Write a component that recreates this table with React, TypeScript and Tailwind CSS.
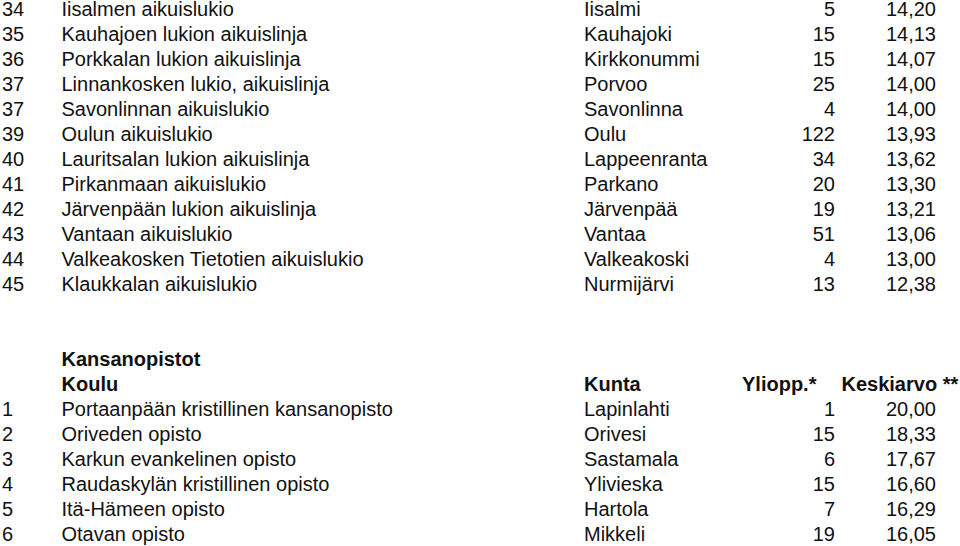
import React from "react";

type Row = [string, string, string, string, string];

const top: Row[] = [
  ["34", "Iisalmen aikuislukio", "Iisalmi", "5", "14,20"],
  ["35", "Kauhajoen lukion aikuislinja", "Kauhajoki", "15", "14,13"],
  ["36", "Porkkalan lukion aikuislinja", "Kirkkonummi", "15", "14,07"],
  ["37", "Linnankosken lukio, aikuislinja", "Porvoo", "25", "14,00"],
  ["37", "Savonlinnan aikuislukio", "Savonlinna", "4", "14,00"],
  ["39", "Oulun aikuislukio", "Oulu", "122", "13,93"],
  ["40", "Lauritsalan lukion aikuislinja", "Lappeenranta", "34", "13,62"],
  ["41", "Pirkanmaan aikuislukio", "Parkano", "20", "13,30"],
  ["42", "Järvenpään lukion aikuislinja", "Järvenpää", "19", "13,21"],
  ["43", "Vantaan aikuislukio", "Vantaa", "51", "13,06"],
  ["44", "Valkeakosken Tietotien aikuislukio", "Valkeakoski", "4", "13,00"],
  ["45", "Klaukkalan aikuislukio", "Nurmijärvi", "13", "12,38"],
];

const bottom: Row[] = [
  ["1", "Portaanpään kristillinen kansanopisto", "Lapinlahti", "1", "20,00"],
  ["2", "Oriveden opisto", "Orivesi", "15", "18,33"],
  ["3", "Karkun evankelinen opisto", "Sastamala", "6", "17,67"],
  ["4", "Raudaskylän kristillinen opisto", "Ylivieska", "15", "16,60"],
  ["5", "Itä-Hämeen opisto", "Hartola", "7", "16,29"],
  ["6", "Otavan opisto", "Mikkeli", "19", "16,05"],
];

const grid =
  "grid grid-cols-[61.5px_522.5px_155px_96px_101px] h-[25px] leading-[18px] items-start whitespace-nowrap";

function DataRow({ r }: { r: Row }) {
  return (
    <div className={grid}>
      <div className="pl-[2px]">{r[0]}</div>
      <div>{r[1]}</div>
      <div>{r[2]}</div>
      <div className="text-right">{r[3]}</div>
      <div className="text-right">{r[4]}</div>
    </div>
  );
}

export default function App() {
  return (
    <div className="w-[960px] h-[546px] overflow-hidden bg-white text-[#111]">
      <div className="text-[20px] font-['Liberation_Sans',Arial,sans-serif]">
        {top.map((r, i) => (
          <DataRow key={"t" + i} r={r} />
        ))}
        <div className="h-[50px]" />
        <div className={grid + " font-bold"}>
          <div />
          <div>Kansanopistot</div>
          <div />
          <div />
          <div />
        </div>
        <div className={grid + " font-bold"}>
          <div />
          <div>Koulu</div>
          <div>Kunta</div>
          <div className="pl-[3px]">Yliopp.*</div>
          <div className="pl-[6.5px]">Keskiarvo **</div>
        </div>
        {bottom.map((r, i) => (
          <DataRow key={"b" + i} r={r} />
        ))}
      </div>
    </div>
  );
}
